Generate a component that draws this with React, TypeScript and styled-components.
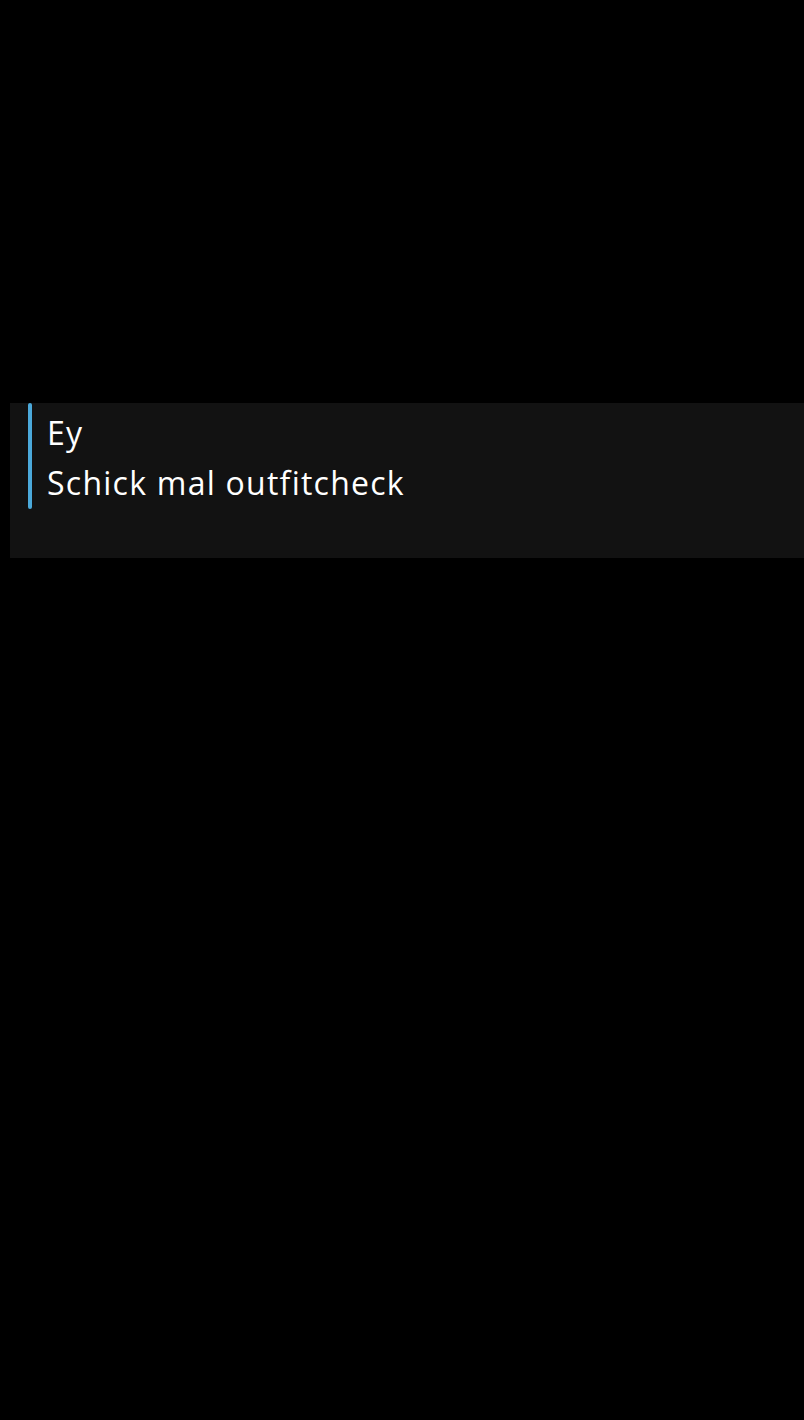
import React from "react";
import styled, { createGlobalStyle } from "styled-components";

const Global = createGlobalStyle`
  html, body { margin: 0; padding: 0; background: #000; }
  body { width: 804px; height: 1420px; overflow: hidden; font-family: "Open Sans", sans-serif; }
`;

const Page = styled.div`
  width: 804px;
  height: 1420px;
  background: #000;
  padding-top: 403px;
  padding-left: 10px;
  box-sizing: border-box;
`;

const Panel = styled.div`
  height: 155px;
  background: #121212;
  padding-left: 18px;
  box-sizing: border-box;
`;

const Quote = styled.div`
  display: flex;
  align-items: stretch;
  height: 106px;
`;

const Bar = styled.div`
  width: 4px;
  border-radius: 2px;
  background: #4ba9da;
  flex: none;
`;

const Lines = styled.div`
  margin-left: 15px;
  padding-top: 5px;
  display: flex;
  flex-direction: column;
`;

const Line = styled.div`
  color: #fff;
  font-family: "Open Sans", sans-serif;
  font-size: 32px;
  letter-spacing: 1.25px;
  line-height: 50px;
  white-space: nowrap;
`;

export default function App() {
  return (
    <>
      <Global />
      <Page>
        <Panel>
          <Quote>
            <Bar />
            <Lines>
              <Line>Ey</Line>
              <Line>Schick mal outfitcheck</Line>
            </Lines>
          </Quote>
        </Panel>
      </Page>
    </>
  );
}
